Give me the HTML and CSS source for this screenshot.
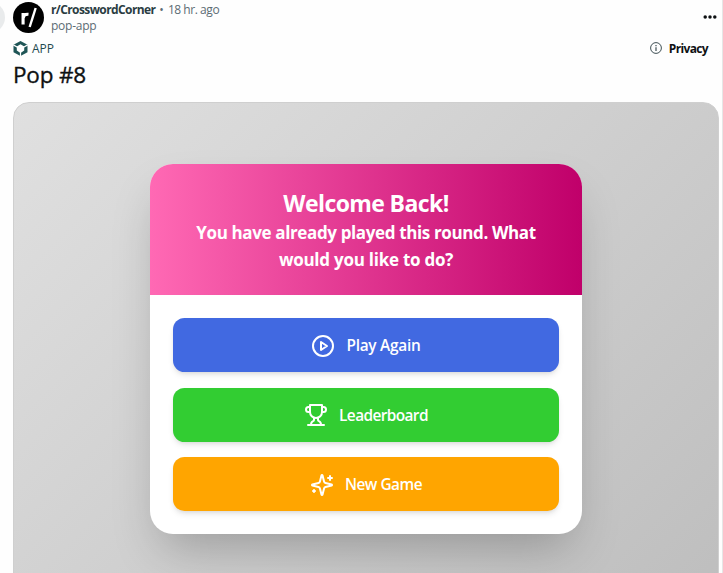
FILE: index.html
```html
<!DOCTYPE html>
<html lang="en">
<head>
    <meta charset="UTF-8">
    <meta name="viewport" content="width=device-width, initial-scale=1.0">
    <title>Pop #8</title>
    <link rel="stylesheet" href="styles.css">
</head>
<body>
    <div class="back-btn"></div>
    <main class="post">
        <header class="post-header">
            <svg class="avatar" viewBox="0 0 32 32">
                <circle cx="16" cy="16" r="16" fill="#000"/>
                <path d="M10.4 23.2V11.4M10.5 16.6c.3-2.8 2-4.2 5.5-3.9" fill="none" stroke="#fff" stroke-width="3.2"/>
                <path d="M17.2 25.8L23.4 6.2" stroke="#fff" stroke-width="2.5"/>
            </svg>
            <div class="post-meta">
                <div class="meta-top">
                    <span class="community">r/CrosswordCorner</span>
                    <span class="dot">•</span>
                    <span class="time">18 hr. ago</span>
                </div>
                <div class="author">pop-app</div>
            </div>
            <svg class="more-icon" viewBox="0 0 14 4" fill="#0e1113">
                <circle cx="2.2" cy="2" r="1.75"/>
                <circle cx="7" cy="2" r="1.75"/>
                <circle cx="11.8" cy="2" r="1.75"/>
            </svg>
        </header>

        <div class="app-row">
            <svg class="app-icon" viewBox="0 0 15 15">
                <path d="M7.5 0L14.5 3.8V11.2L7.5 15L.5 11.2V3.8Z" fill="#1f5556"/>
                <path d="M7.5 3.2L11.2 5.5V9.6L7.5 11.9L3.8 9.6V5.5Z" fill="#fff"/>
                <path d="M7.5 11V15M4.5 6.2L.3 3.9M10.5 6.2L14.7 3.9" stroke="#fff" stroke-width="1.2"/>
            </svg>
            <span class="app-label">APP</span>
            <svg class="info-icon" viewBox="0 0 12 12" fill="none" stroke="#2a3c42">
                <circle cx="6" cy="6" r="5.4" stroke-width=".9"/>
                <path d="M6 5.2V9M6 3V4.2" stroke-width="1.1"/>
            </svg>
            <span class="privacy">Privacy</span>
        </div>

        <h1 class="post-title">Pop #8</h1>

        <section class="game">
            <div class="card">
                <div class="card-header">
                    <h2>Welcome Back!</h2>
                    <p class="line-one">You have already played this round. What</p>
                    <p class="line-two">would you like to do?</p>
                </div>
                <div class="card-body">
                    <button class="btn btn-play">
                        <svg class="btn-icon" viewBox="0 0 24 24">
                            <circle cx="12" cy="12" r="10"/>
                            <polygon points="10 8 16 12 10 16 10 8"/>
                        </svg>
                        <span>Play Again</span>
                    </button>
                    <button class="btn btn-leaderboard">
                        <svg class="btn-icon" viewBox="0 0 24 24">
                            <path d="M6 9H4.5a2.5 2.5 0 0 1 0-5H6"/>
                            <path d="M18 9h1.5a2.5 2.5 0 0 0 0-5H18"/>
                            <path d="M4 22h16"/>
                            <path d="M10 14.66V17c0 .55-.47.98-.97 1.21C7.85 18.75 7 20.24 7 22"/>
                            <path d="M14 14.66V17c0 .55.47.98.97 1.21C16.15 18.75 17 20.24 17 22"/>
                            <path d="M18 2H6v7a6 6 0 0 0 12 0V2Z"/>
                        </svg>
                        <span>Leaderboard</span>
                    </button>
                    <button class="btn btn-new">
                        <svg class="btn-icon" viewBox="0 0 24 24">
                            <path d="M9.937 15.5A2 2 0 0 0 8.5 14.063l-6.135-1.582a.5.5 0 0 1 0-.962L8.5 9.936A2 2 0 0 0 9.937 8.5l1.582-6.135a.5.5 0 0 1 .963 0L14.063 8.5A2 2 0 0 0 15.5 9.937l6.135 1.581a.5.5 0 0 1 0 .964L15.5 14.063a2 2 0 0 0-1.437 1.437l-1.582 6.135a.5.5 0 0 1-.963 0z"/>
                            <path d="M20 3v4"/>
                            <path d="M22 5h-4"/>
                            <path d="M4 17v2"/>
                            <path d="M5 18H3"/>
                        </svg>
                        <span>New Game</span>
                    </button>
                </div>
            </div>
        </section>
    </main>
</body>
</html>
```
FILE: styles.css
```css
* {
    margin: 0;
    padding: 0;
    box-sizing: border-box;
}

body {
    width: 723px;
    height: 573px;
    overflow: hidden;
    background: #fefefe;
    border-right: 1px solid #e6e6e6;
    font-family: 'Open Sans', 'Noto Sans', sans-serif;
    color: #0e1113;
}

/* Round button cut off by the left edge */
.back-btn {
    position: absolute;
    left: -26px;
    top: 2px;
    width: 31px;
    height: 31px;
    border-radius: 50%;
    background: #e9ebec;
}

.post {
    padding: 1px 3px 0 13px;
}

.post-header {
    display: flex;
    height: 34px;
}

.avatar {
    width: 31px;
    height: 31px;
    margin-top: 1px;
}

.post-meta {
    flex: 1;
    padding: 1px 0 0 7px;
    font-size: 12px;
    line-height: 16px;
}

.meta-top {
    display: flex;
    gap: 4px;
}

.community {
    font-weight: 700;
    letter-spacing: -0.6px;
    color: #2a3c42;
}

.dot,
.time,
.author {
    color: #5c6c74;
}

.time {
    letter-spacing: -0.45px;
}

.author {
    letter-spacing: -0.25px;
}

.more-icon {
    width: 14px;
    height: 4px;
    margin: 14px 2px 0 0;
}

.app-row {
    display: flex;
    align-items: center;
    height: 26px;
    padding-right: 11px;
    font-size: 12px;
}

.app-icon {
    width: 15px;
    height: 15px;
}

.app-label {
    flex: 1;
    margin-left: 4px;
    color: #1f4a50;
}

.info-icon {
    width: 12px;
    height: 12px;
}

.privacy {
    margin-left: 7px;
    font-weight: 700;
    letter-spacing: -0.65px;
}

.post-title {
    height: 41px;
    font-size: 22.5px;
    font-weight: 400;
    letter-spacing: -0.2px;
    line-height: 28px;
    -webkit-text-stroke: 0.35px currentColor;
}

.game {
    display: flex;
    align-items: center;
    justify-content: center;
    height: 494px;
    border-radius: 16px;
    background: linear-gradient(135deg, #e0e0e0, #bebebe);
    border: 1px solid #cfcfcf;
}

.card {
    width: 432px;
    border-radius: 23px;
    overflow: hidden;
    background: #fff;
    box-shadow: 0 24px 48px -12px rgba(0, 0, 0, 0.25);
}

.card-header {
    height: 131px;
    padding-top: 24px;
    background: linear-gradient(to right, #ff69b4, #c0006a);
    color: #fff;
    text-align: center;
    font-weight: 700;
}

.card-header h2 {
    font-size: 23px;
    letter-spacing: -0.6px;
    line-height: 31px;
}

.card-header p {
    font-size: 17px;
    line-height: 27px;
    white-space: nowrap;
}

.line-one {
    letter-spacing: -0.37px;
}

.line-two {
    letter-spacing: -0.25px;
}

.card-body {
    display: flex;
    flex-direction: column;
    gap: 15.5px;
    padding: 23px;
}

.btn {
    display: flex;
    align-items: center;
    justify-content: center;
    gap: 11px;
    height: 54px;
    padding-top: 1px;
    border: none;
    border-radius: 11.5px;
    box-shadow: 0 4px 6px -1px rgba(0, 0, 0, 0.1), 0 2px 4px -2px rgba(0, 0, 0, 0.1);
    color: #fff;
    font-family: inherit;
    font-size: 15.4px;
    font-weight: 600;
    cursor: pointer;
}

.btn-play {
    background: #4169e1;
    letter-spacing: -0.25px;
}

.btn-leaderboard {
    background: #32cd32;
    letter-spacing: -0.6px;
}

.btn-new {
    background: #ffa500;
    letter-spacing: -0.5px;
}

.btn-icon {
    width: 24px;
    height: 24px;
    fill: none;
    stroke: currentColor;
    stroke-width: 2;
    stroke-linecap: round;
    stroke-linejoin: round;
}
```
